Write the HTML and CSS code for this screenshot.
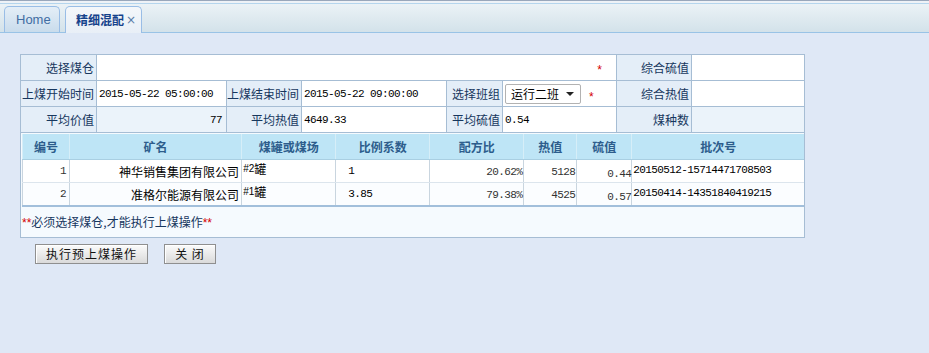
FILE: index.html
```html
<!doctype html>
<html lang="zh">
<head>
  <meta charset="UTF-8" />
  <title>精细混配</title>
  <meta name="viewport" content="width=device-width, initial-scale=1.0" />
  <link rel="stylesheet" href="styles.css">
</head>
<body>
  <!-- Tab strip -->
  <div class="tabbar">
    <div class="strip">
      <div class="tab home">Home</div>
      <div class="tab active">精细混配<span class="close">×</span></div>
    </div>
  </div>

  <div class="content">
    <table class="form">
      <colgroup>
        <col style="width:76px">
        <col style="width:130px">
        <col style="width:75px">
        <col style="width:145px">
        <col style="width:56px">
        <col style="width:114px">
        <col style="width:75px">
        <col style="width:113px">
      </colgroup>
      <tr>
        <td class="label">选择煤仓</td>
        <td class="value req-cell" colspan="5"><span class="req">*</span></td>
        <td class="label">综合硫值</td>
        <td class="value"></td>
      </tr>
      <tr>
        <td class="label">上煤开始时间</td>
        <td class="value mono">2015-05-22 05:00:00</td>
        <td class="label">上煤结束时间</td>
        <td class="value mono">2015-05-22 09:00:00</td>
        <td class="label">选择班组</td>
        <td class="value">
          <div class="shift">
            <div class="select"><span>运行二班</span><i class="caret"></i></div>
            <span class="req">*</span>
          </div>
        </td>
        <td class="label">综合热值</td>
        <td class="value"></td>
      </tr>
      <tr>
        <td class="label">平均价值</td>
        <td class="value mono readonly right">77</td>
        <td class="label">平均热值</td>
        <td class="value mono">4649.33</td>
        <td class="label">平均硫值</td>
        <td class="value mono">0.54</td>
        <td class="label">煤种数</td>
        <td class="value readonly"></td>
      </tr>
      <tr>
        <td class="grid-cell" colspan="8">
          <table class="grid">
            <colgroup>
              <col style="width:47px">
              <col style="width:172px">
              <col style="width:94px">
              <col style="width:94px">
              <col style="width:94px">
              <col style="width:53px">
              <col style="width:55px">
              <col style="width:172px">
            </colgroup>
            <thead>
              <tr>
                <th>编号</th>
                <th>矿名</th>
                <th>煤罐或煤场</th>
                <th>比例系数</th>
                <th>配方比</th>
                <th>热值</th>
                <th>硫值</th>
                <th>批次号</th>
              </tr>
            </thead>
            <tbody>
              <tr>
                <td class="num">1</td>
                <td class="right">神华销售集团有限公司</td>
                <td class="bin"><small>#2</small>罐</td>
                <td class="ratio">1</td>
                <td class="num low">20.62%</td>
                <td class="num low">5128</td>
                <td class="num lower">0.44</td>
                <td class="batch">20150512-15714471708503</td>
              </tr>
              <tr class="alt">
                <td class="num">2</td>
                <td class="right">准格尔能源有限公司</td>
                <td class="bin"><small>#1</small>罐</td>
                <td class="ratio">3.85</td>
                <td class="num low">79.38%</td>
                <td class="num low">4525</td>
                <td class="num lower">0.57</td>
                <td class="batch">20150414-14351840419215</td>
              </tr>
            </tbody>
          </table>
          <div class="notice"><span class="req">**</span>必须选择煤仓,才能执行上煤操作<span class="req">**</span></div>
        </td>
      </tr>
    </table>

    <div class="buttons">
      <button class="wide">执行预上煤操作</button>
      <button class="short">关 闭</button>
    </div>
  </div>
</body>
</html>
```

FILE: styles.css
```css
body, html {
  margin: 0;
  padding: 0;
  background: #dfe8f6;
  font-family: "Noto Sans CJK SC", sans-serif;
  font-size: 12px;
  color: #000;
}
/* Tab strip */
.tabbar {
  border-top: 1px solid #99a7bb;
  padding-top: 2px;
  background: #eef2f7;
}
.strip {
  display: flex;
  align-items: flex-end;
  gap: 5px;
  height: 28px;
  padding-left: 4px;
  border-top: 1px solid #b4d5ed;
  border-bottom: 1px solid #99c3e6;
  background: linear-gradient(#ebf2f6, #d3e2ea);
}
.tab {
  box-sizing: border-box;
  height: 26px;
  display: flex;
  align-items: center;
  border: 1px solid #99bde6;
  border-bottom: none;
  border-radius: 5px 5px 0 0;
}
.tab.home {
  width: 56px;
  padding-left: 11px;
  background: linear-gradient(#e4eef7, #c9dcec);
  color: #416da3;
  font-family: "Liberation Sans", sans-serif;
  font-size: 13px;
}
.tab.active {
  width: 77px;
  height: 27px;
  margin-bottom: -1px;
  padding-left: 10px;
  padding-bottom: 1px;
  background: linear-gradient(#f4f7fa, #e8eff7);
  color: #15428b;
  font-weight: bold;
}
.close {
  margin-left: 2px;
  color: #5a7ca8;
  font-weight: normal;
  font-family: "DejaVu Sans", sans-serif;
  font-size: 12px;
}
/* Form */
.content {
  padding: 21px 0 0 20px;
}
.form {
  border-collapse: collapse;
  table-layout: fixed;
  width: 785px;
}
.form > tbody > tr > td {
  border: 1px solid #a6bdd4;
  height: 25px;
  padding: 0;
  line-height: 14px;
}
.label {
  background: #e4eef8;
  color: #17375e;
  text-align: right;
  padding-right: 2px !important;
  white-space: nowrap;
}
.value {
  background: #fff;
  padding-left: 2px !important;
}
.value.readonly {
  background: #ebf3fa;
}
.right {
  text-align: right;
}
.value.right {
  padding-right: 4px !important;
}
.mono {
  font-family: "Liberation Mono", monospace;
  font-size: 11px;
  letter-spacing: -0.6px;
}
.req {
  color: #d40000;
  font-family: "Liberation Sans", sans-serif;
}
.req-cell {
  text-align: right;
  padding-right: 14px !important;
}
.req-cell .req {
  position: relative;
  top: 2px;
}
.shift {
  display: flex;
  align-items: center;
  gap: 8px;
}
.select {
  box-sizing: border-box;
  width: 76px;
  height: 20px;
  display: flex;
  align-items: center;
  justify-content: space-between;
  padding: 0 6px 0 5px;
  border: 1px solid #b2b2b2;
  border-radius: 2px;
  background: #fff;
}
.caret {
  width: 0;
  height: 0;
  border-left: 4px solid transparent;
  border-right: 4px solid transparent;
  border-top: 4px solid #222;
}
.shift .req {
  position: relative;
  top: 3px;
}
/* Inner grid */
.form > tbody > tr > td.grid-cell {
  padding: 1px 0 0 1px;
  background: #f5fafe;
  height: auto;
}
.grid {
  border-collapse: collapse;
  table-layout: fixed;
  width: 782px;
  border-left: 1px solid #b1c6d9;
  border-bottom: 2px solid #a2bfdb;
}
.grid th {
  height: 25px;
  padding: 0;
  line-height: 14px;
  background: #bee5f6;
  color: #2d5d8c;
  font-weight: bold;
  border-left: 1px solid #d6eef8;
  border-bottom: 1px solid #a9cfe2;
}
.grid td {
  height: 19px;
  padding: 0;
  line-height: 13px;
  background: #fff;
  border-left: 1px solid #c9d5df;
  border-bottom: 1px solid #dce5ed;
  vertical-align: middle;
  white-space: nowrap;
}
.grid tr.alt td {
  background: #fbfdff;
  border-bottom: none;
}
.grid td.num {
  text-align: right;
  padding-right: 3px;
  font-family: "Liberation Mono", monospace;
  font-size: 11px;
  letter-spacing: -0.6px;
  color: #333;
}
.grid td.right {
  padding-right: 2px;
}
.grid td.low {
  vertical-align: bottom;
  padding: 0 1px 3px 0;
}
.grid td.lower {
  vertical-align: bottom;
  padding: 0 0 1px 0;
}
.grid td.bin {
  vertical-align: top;
  padding: 2px 0 0 1px;
}
.bin small {
  font-family: "Liberation Sans", sans-serif;
  font-size: 10px;
  vertical-align: top;
}
.grid td.ratio {
  padding-left: 12px;
  font-family: "Liberation Mono", monospace;
  font-size: 11px;
  letter-spacing: -0.6px;
}
.grid td.batch {
  padding: 0 0 2px 1px;
  font-family: "Liberation Mono", monospace;
  font-size: 11px;
  letter-spacing: -0.6px;
}
.notice {
  height: 30px;
  line-height: 30px;
  color: #17375e;
}
/* Buttons */
.buttons {
  display: flex;
  gap: 16px;
  margin: 6px 0 0 15px;
}
button {
  box-sizing: border-box;
  height: 20px;
  padding: 0;
  border: 1px solid #8f8f8f;
  border-radius: 0;
  background: linear-gradient(#fbfbfb, #dadada);
  box-shadow: inset 1px 1px 0 #fff;
  font-family: "Noto Sans CJK SC", sans-serif;
  font-size: 12px;
  letter-spacing: 1px;
  color: #111;
  line-height: 16px;
}
button.wide {
  width: 113px;
}
button.short {
  width: 52px;
}
```
